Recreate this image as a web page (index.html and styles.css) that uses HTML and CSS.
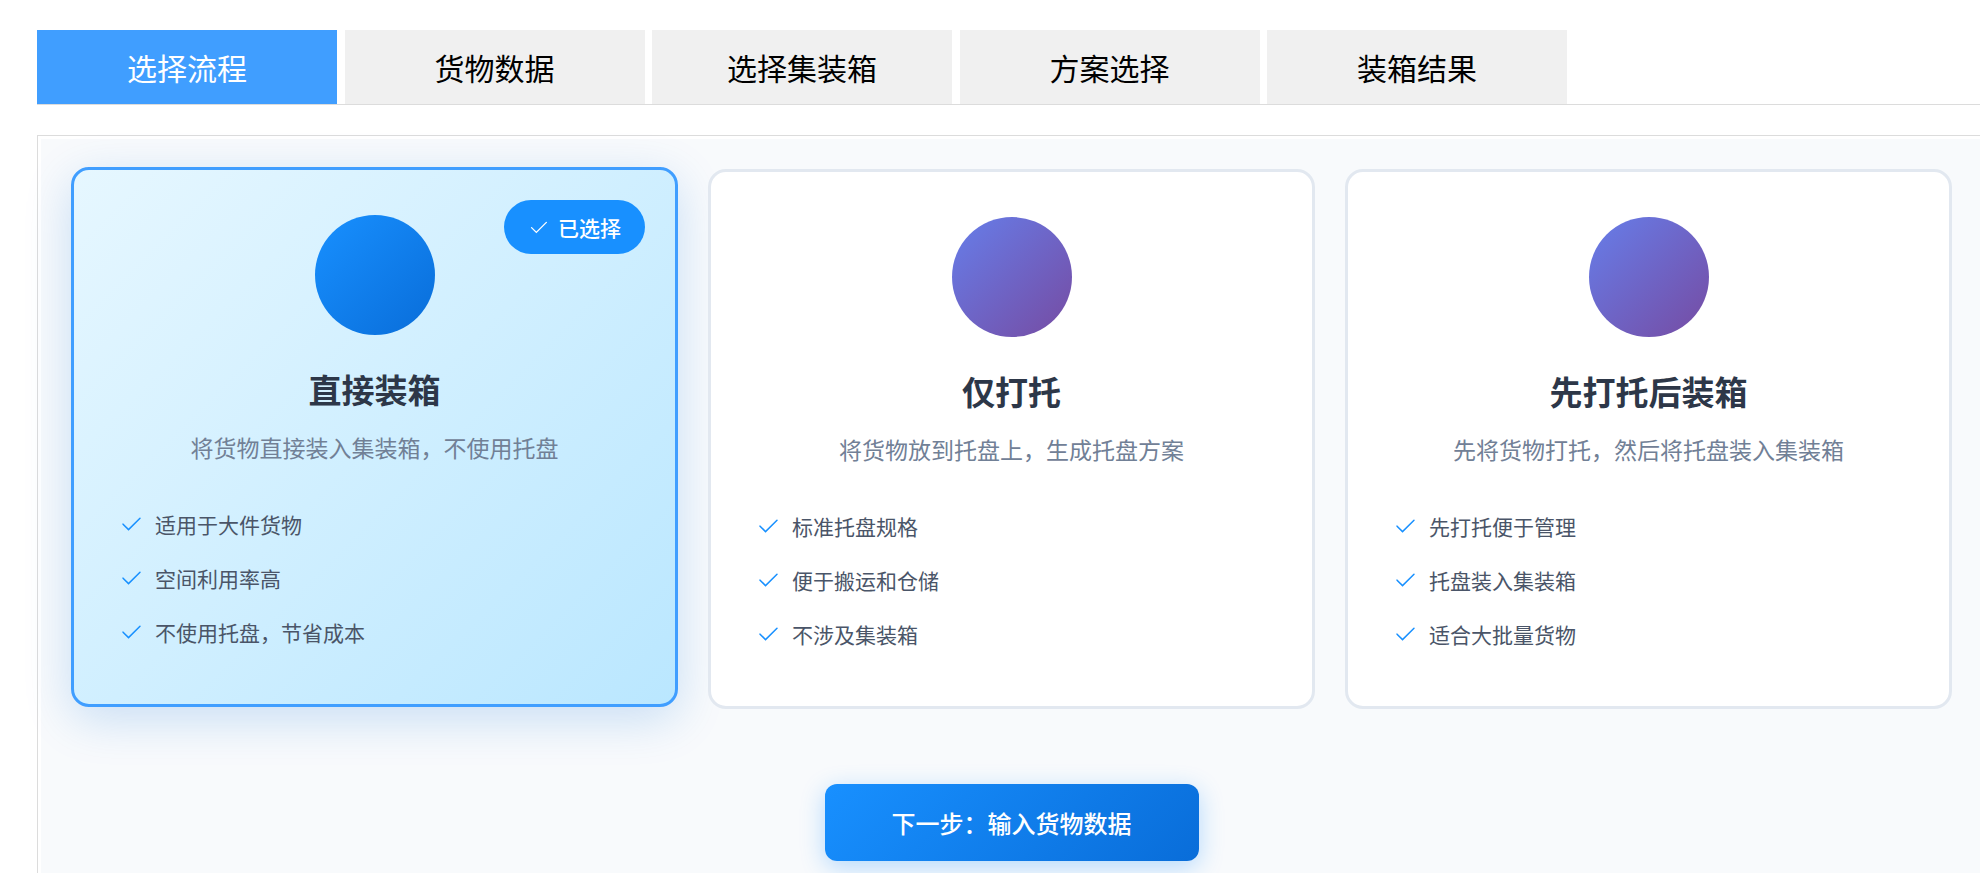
FILE: index.html
```html
<!DOCTYPE html>
<html lang="zh-CN">
<head>
<meta charset="utf-8">
<meta name="viewport" content="width=device-width, initial-scale=1">
<title>选择流程</title>
<link rel="stylesheet" href="styles.css">
</head>
<body>
<svg class="sprite" aria-hidden="true">
  <symbol id="check" viewBox="0 0 1024 1024">
    <path fill="currentColor" d="M406.656 706.944 195.84 496.256a32 32 0 1 0-45.248 45.248l256 256 512-512a32 32 0 0 0-45.248-45.248L406.592 706.944z"/>
  </symbol>
</svg>
<main class="page">
  <nav class="tabs">
    <button class="tab tab-active" type="button">选择流程</button>
    <button class="tab" type="button">货物数据</button>
    <button class="tab" type="button">选择集装箱</button>
    <button class="tab" type="button">方案选择</button>
    <button class="tab" type="button">装箱结果</button>
  </nav>
  <section class="panel">
    <div class="flow">
      <div class="cards">
        <article class="card card-selected">
          <div class="badge"><svg class="badge-icon"><use href="#check"/></svg>已选择</div>
          <div class="circle"></div>
          <h3 class="title">直接装箱</h3>
          <p class="desc">将货物直接装入集装箱，不使用托盘</p>
          <ul class="features">
            <li class="feature"><svg class="feature-icon"><use href="#check"/></svg>适用于大件货物</li>
            <li class="feature"><svg class="feature-icon"><use href="#check"/></svg>空间利用率高</li>
            <li class="feature"><svg class="feature-icon"><use href="#check"/></svg>不使用托盘，节省成本</li>
          </ul>
        </article>
        <article class="card">
          <div class="circle"></div>
          <h3 class="title">仅打托</h3>
          <p class="desc">将货物放到托盘上，生成托盘方案</p>
          <ul class="features">
            <li class="feature"><svg class="feature-icon"><use href="#check"/></svg>标准托盘规格</li>
            <li class="feature"><svg class="feature-icon"><use href="#check"/></svg>便于搬运和仓储</li>
            <li class="feature"><svg class="feature-icon"><use href="#check"/></svg>不涉及集装箱</li>
          </ul>
        </article>
        <article class="card">
          <div class="circle"></div>
          <h3 class="title">先打托后装箱</h3>
          <p class="desc">先将货物打托，然后将托盘装入集装箱</p>
          <ul class="features">
            <li class="feature"><svg class="feature-icon"><use href="#check"/></svg>先打托便于管理</li>
            <li class="feature"><svg class="feature-icon"><use href="#check"/></svg>托盘装入集装箱</li>
            <li class="feature"><svg class="feature-icon"><use href="#check"/></svg>适合大批量货物</li>
          </ul>
        </article>
      </div>
      <button class="next" type="button">下一步：输入货物数据</button>
    </div>
  </section>
</main>
</body>
</html>
```

FILE: styles.css
```css
* {
  box-sizing: border-box;
}

html {
  overflow: hidden;
}

body {
  margin: 0;
  background: #fff;
  font-family: "Noto Sans CJK SC", sans-serif;
}

.sprite {
  display: none;
}

.page {
  display: flex;
  flex-direction: column;
  gap: 30px;
  min-height: 100vh;
  margin-right: -6px;
  padding: 30px 0 0 37px;
}

.tabs {
  border-bottom: 1px solid #dcdcdc;
  font-family: "Liberation Serif", serif;
  font-size: 30px;
  line-height: 0;
  white-space: nowrap;
}

.tab {
  width: 300px;
  height: 74px;
  padding: 0;
  border: 0;
  background: #f0f0f0;
  color: #000;
  font-family: "Noto Sans CJK SC", sans-serif;
  font-size: 30px;
  line-height: 44px;
  vertical-align: top;
  cursor: pointer;
}

.tab-active {
  background: #409eff;
  color: #fff;
}

.panel {
  display: flex;
  flex: 1;
  padding: 3px 3px 0;
  border: 1px solid #dcdcdc;
  border-bottom: 0;
}

.flow {
  display: flex;
  flex: 1;
  flex-direction: column;
  align-items: center;
  gap: 75px;
  padding: 30px 30px 12px;
  background: #f8fafc;
}

.cards {
  display: grid;
  grid-template-columns: repeat(3, 1fr);
  gap: 30px;
  width: 100%;
}

.card {
  position: relative;
  display: flex;
  flex-direction: column;
  align-items: center;
  padding: 45px;
  border: 3px solid #e2e8f0;
  border-radius: 18px;
  background: #fff;
}

.card-selected {
  top: -2px;
  border-color: #409eff;
  background: linear-gradient(135deg, #e6f7ff 0%, #bae7ff 100%);
  box-shadow: 0 12px 48px rgba(9, 109, 217, 0.2);
}

.badge {
  position: absolute;
  top: 30px;
  right: 30px;
  display: flex;
  align-items: center;
  gap: 9px;
  padding: 12px 24px;
  border-radius: 30px;
  background: #1890ff;
  color: #fff;
  font-size: 21px;
  font-weight: 500;
  line-height: 30px;
}

.badge-icon {
  width: 21px;
  height: 21px;
}

.circle {
  width: 120px;
  height: 120px;
  margin-bottom: 30px;
  border-radius: 50%;
  background: linear-gradient(135deg, #667eea 0%, #764ba2 100%);
}

.card-selected .circle {
  background: linear-gradient(135deg, #1890ff 0%, #096dd9 100%);
}

.title {
  margin: 0 0 16px;
  color: #2d3748;
  font-size: 33px;
  font-weight: 700;
  line-height: 48px;
}

.desc {
  margin: 0 0 32px;
  color: #718096;
  font-size: 23px;
  line-height: 36px;
}

.features {
  align-self: stretch;
  margin: 0;
  padding: 0;
  list-style: none;
}

.feature {
  display: flex;
  align-items: center;
  gap: 12px;
  padding: 12px 0;
  color: #4a5568;
  font-size: 21px;
  line-height: 30px;
}

.feature-icon {
  width: 24px;
  height: 24px;
  color: #1890ff;
}

.next {
  padding: 20px 67px;
  border: 0;
  border-radius: 12px;
  background: linear-gradient(135deg, #1890ff 0%, #096dd9 100%);
  box-shadow: 0 6px 24px rgba(24, 144, 255, 0.3);
  color: #fff;
  font-family: inherit;
  font-size: 24px;
  font-weight: 500;
  line-height: 37px;
  cursor: pointer;
}
```
